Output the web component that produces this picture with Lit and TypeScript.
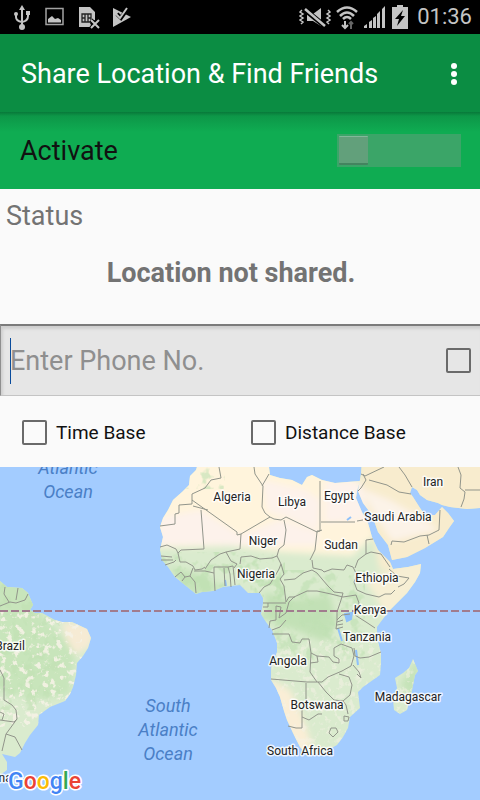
import { LitElement, html, css, svg } from "lit";
import { customElement, state } from "lit/decorators.js";

type Label = { x: number; y: number; text: string };

const COUNTRIES: Label[] = [
  { x: 232, y: 501, text: "Algeria" },
  { x: 292, y: 506, text: "Libya" },
  { x: 339, y: 500, text: "Egypt" },
  { x: 433, y: 486, text: "Iran" },
  { x: 398, y: 521, text: "Saudi Arabia" },
  { x: 263, y: 545, text: "Niger" },
  { x: 341, y: 549, text: "Sudan" },
  { x: 256, y: 578, text: "Nigeria" },
  { x: 377, y: 582, text: "Ethiopia" },
  { x: 370, y: 614, text: "Kenya" },
  { x: 367, y: 641, text: "Tanzania" },
  { x: 288, y: 665, text: "Angola" },
  { x: 317, y: 709, text: "Botswana" },
  { x: 408, y: 701, text: "Madagascar" },
  { x: 300, y: 755, text: "South Africa" },
  { x: 10, y: 650, text: "Brazil" },
  { x: -14, y: 782, text: "Argentina" },
];

const OCEANS: Label[] = [
  { x: 68, y: 474, text: "Atlantic" },
  { x: 68, y: 498, text: "Ocean" },
  { x: 168, y: 712, text: "South" },
  { x: 168, y: 736, text: "Atlantic" },
  { x: 168, y: 760, text: "Ocean" },
];

const AFRICA =
  "M199 460L196 470 190 476 189 485 182 492 173 500 168 510 163 518 160 527 163 537 160 550 162 560 168 567 175 577 185 585 196 594 202 592 213 591 223 587 240 585 248 593 260 593 263 598 263 603 261 614 266 622 272 630 277 643 277 652 271 668 271 680 276 688 280 697 284 711 287 720 293 733 300 747 307 755 323 753 337 745 343 737 348 728 350 717 360 708 359 700 358 692 363 687 380 675 381 664 381 653 377 638 377 627 388 612 398 602 407 593 415 582 420 573 421 564 408 567 393 569 390 562 378 550 372 537 368 523 362 512 356 498 357 491 360 481 347 482 335 483 322 480 312 475 307 477 302 485 292 480 280 478 270 475 269 467 269 460Z";
const ASIA =
  "M362 460L361 474 358 491 363 503 372 515 378 532 388 545 392 560 407 557 425 548 443 537 449 528 454 521 448 513 442 507 435 515 425 515 420 508 413 497 410 493 412 487 417 490 420 495 427 500 438 503 442 505 450 507 467 509 480 508 490 508 490 460Z";
const BRAZIL =
  "M-10 575L0 581 7 587 22 588 28 593 33 605 30 610 35 613 42 613 55 620 62 622 72 622 87 629 91 638 88 648 83 656 77 663 76 675 73 687 70 694 65 701 50 707 39 715 38 725 30 735 25 743 20 753 15 757 2 754 7 762 7 770 0 775 -10 780Z";
const MADAGASCAR =
  "M413 659L418 671 415 675 412 690 407 710 400 714 394 710 393 700 397 688 395 678 403 673 409 668Z";

const BORDERS = [
  "M219 467L221 478 211 480 205 488 192 494 192 504 179 505 179 513 175 514 175 524 160 526",
  "M192 500L237 532 237 535 241 534 270 517 265 513 262 507 263 486 255 474 254 467",
  "M262 486L269 474M270 517L274 519 281 520 286 517 317 532",
  "M193 506L208 510M201 510L204 549 181 550 178 553",
  "M160 547L167 545 176 549 178 553 180 562 186 562 193 566 195 570 202 569 205 567",
  "M161 556L172 557M161 560H173M165 565L174 562 176 560",
  "M175 577L181 572 185 577 182 581M185 577L190 576 195 582 196 593M190 576L193 568",
  "M194 571L205 571 214 573 215 591M214 573V567L228 567 230 574 231 587M224 568L225 586M228 567L233 566 235 585",
  "M205 569L211 560 220 554 226 552 231 561 237 564 234 568",
  "M226 552L240 549 241 534M240 564L241 557 251 556 260 559 272 558 277 556 279 549 284 545 286 530 284 520",
  "M277 556L281 564 279 569 275 576 270 584 264 587 259 593M281 564L284 574 280 579 284 586 286 602",
  "M284 580L295 579 303 573 312 570 317 573M310 560L315 550 317 532 322 530",
  "M312 560L313 568 322 570 324 572 332 569 344 570 347 565 353 567",
  "M317 532V531H320V481M321 522H355M357 521L363 520",
  "M317 573L322 579 328 586 334 592 343 593 341 600 337 612 337 620",
  "M263 603H286M268 603V607H263M276 606V620L270 621 269 628M276 606L281 607 279 618 286 613 289 602 294 597 307 591 317 591 331 594 343 597 356 595",
  "M286 602L289 597 295 597M272 630L280 627 286 620",
  "M353 567L357 575 354 582 357 590 366 594 379 597 385 594 391 594",
  "M366 540L373 539M366 540L366 554 371 552 381 554 390 567M366 554L358 560 355 568",
  "M391 594L395 590M398 587L404 584 409 578 397 576 389 569",
  "M356 595L359 603 355 615M337 620L342 615 350 614M355 615L366 622 375 628",
  "M337 622L343 620M337 625L343 624M337 620L336 629 343 627",
  "M272 634L289 634 292 642 300 643 302 639 309 639 311 653 317 656",
  "M311 653L310 672 317 682M317 656L318 662 310 663M317 656L329 657 333 662 339 663 339 659 334 656 334 648 341 644",
  "M341 644L352 648 354 656 351 666 342 671 328 677 322 682 316 682 307 682 271 679",
  "M354 648L355 656 360 658 369 657 381 652M353 665L359 672 361 678 357 674",
  "M306 683V707H302V728L296 728 288 726M302 717L309 720 318 714 322 714M318 682L326 692 334 700 343 701 350 695 352 685 349 677 339 674",
  "M343 701L346 705 348 714M344 716L349 717 348 721 344 721ZM331 728L336 728 338 732 333 737 329 733Z",
  "M363 474L366 480 361 488 358 491M361 474L365 476 384 467M369 480L387 485 399 492 411 494",
  "M399 467L405 475 412 487M391 545L392 541 404 542 420 536 429 535 439 530 440 510M427 535L429 544",
  "M458 467L461 475 460 488 465 492 464 499 461 507M465 490L480 490",
  "M0 606L10 602 16 603 25 600 28 594M5 587L4 594 9 602M18 588L16 600",
  "M0 670L4 678 4 700 12 705 16 710 17 719 14 722 0 720M17 719L6 734 2 751M6 734L15 737 22 750M0 712L4 714 2 720",
];

@customElement("world-map")
export class WorldMap extends LitElement {
  static styles = css`
    :host {
      display: block;
      overflow: hidden;
      background: #a3ccff;
    }
    .map {
      display: block;
      width: 100%;
      height: 100%;
    }
    .country {
      font: 400 12px Roboto, "Liberation Sans", sans-serif;
      fill: #222;
      stroke: #fff;
      stroke-width: 3px;
      stroke-opacity: 0.8;
      stroke-linejoin: round;
      paint-order: stroke;
      text-anchor: middle;
    }
    .ocean {
      font: italic 400 18px Roboto, "Liberation Sans", sans-serif;
      fill: #4a7fc6;
      text-anchor: middle;
    }
    .border {
      fill: none;
      stroke: #92958b;
      stroke-width: 1;
      stroke-linejoin: round;
    }
    .logo {
      font: 500 23px Roboto, "Liberation Sans", sans-serif;
      stroke: #fff;
      stroke-width: 3px;
      stroke-linejoin: round;
      paint-order: stroke;
    }
    .blue { fill: #4285f4; }
    .red { fill: #ea4335; }
    .yellow { fill: #fbbc05; }
    .green { fill: #34a853; }
  `;

  render() {
    return html`
      <svg class="map" viewBox="0 467 480 333" preserveAspectRatio="xMidYMid slice" role="img" aria-label="Map">
        <defs>
          <clipPath id="land">
            <path d=${AFRICA} /><path d=${ASIA} /><path d=${BRAZIL} /><path d=${MADAGASCAR} />
          </clipPath>
          <filter id="soft" x="-20%" y="-20%" width="140%" height="140%">
            <feGaussianBlur stdDeviation="3" />
          </filter>
          <filter id="pale" x="0" y="0" width="1" height="1" color-interpolation-filters="sRGB">
            <feTurbulence type="fractalNoise" baseFrequency="0.16" numOctaves="3" seed="4" />
            <feColorMatrix values="0 0 0 0 0.96  0 0 0 0 0.95  0 0 0 0 0.9  7 0 0 0 -3.8" />
          </filter>
          <filter id="leaf" x="0" y="0" width="1" height="1" color-interpolation-filters="sRGB">
            <feTurbulence type="fractalNoise" baseFrequency="0.08" numOctaves="3" seed="9" />
            <feColorMatrix values="0 0 0 0 0.75  0 0 0 0 0.88  0 0 0 0 0.7  7 0 0 0 -3.6" />
          </filter>
        </defs>
        <g clip-path="url(#land)">
          <rect x="0" y="460" width="480" height="340" fill="#daebce" />
          <g filter="url(#soft)">
            <path d="M150 455H350L375 535 352 556 280 552 230 546 155 548Z" fill="#fff4dc" />
            <path d="M160 518L200 510 240 535 280 520 318 532 318 545 270 545 200 545 160 545ZM262 480L305 490 320 500 318 530 285 516 268 512ZM325 480L362 482 368 520 325 522Z" fill="#fdf2eb" />
            <path d="M355 455H495V570H380Z" fill="#f8ecce" />
            <path d="M360 488L390 500 425 520 438 530 392 541 378 520Z" fill="#fcf3e8" />
            <path d="M365 580L430 556 425 580 385 622 378 600Z" fill="#f7efd4" />
            <path d="M264 592L290 600 330 595 336 620 325 642 295 630 270 622Z" fill="#c2e1b6" />
            <path d="M268 678L290 690 302 715 312 745 300 755 280 720Z" fill="#faeed6" />
            <path d="M-5 580H30L42 616 76 650 70 695 35 700 -5 690Z" fill="#c8e5bb" />
            <path d="M62 622L94 625 92 645 75 655 66 640Z" fill="#f6ebd4" />
            <path d="M168 566L200 574 228 590 190 594ZM400 685L420 655 415 700Z" fill="#c5e3b8" />
          </g>
          <rect x="155" y="552" width="130" height="48" filter="url(#leaf)" opacity="0.7" />
          <rect x="255" y="570" width="110" height="90" filter="url(#leaf)" opacity="0.6" />
          <rect x="0" y="580" width="60" height="130" filter="url(#leaf)" opacity="0.5" />
          <rect x="0" y="612" width="82" height="115" filter="url(#pale)" opacity="0.9" />
          <rect x="265" y="640" width="155" height="110" filter="url(#pale)" opacity="0.5" />
          <rect x="180" y="467" width="45" height="22" filter="url(#leaf)" opacity="0.6" />
        </g>
        <path d="M345 614L352 613 351 619 347 621ZM338 628L342 641M356 650L358 665M225 580L226 586M347 520L351 517" fill="#8ec0fa" stroke="#8ec0fa" stroke-width="2" />
        ${BORDERS.map((d) => svg`<path class="border" d=${d} />`)}
        <path d="M0 611H480" stroke="#a17c8e" stroke-width="2" stroke-dasharray="8 3" />
        ${OCEANS.map((l) => svg`<text class="ocean" x=${l.x} y=${l.y}>${l.text}</text>`)}
        ${COUNTRIES.map((l) => svg`<text class="country" x=${l.x} y=${l.y}>${l.text}</text>`)}
        <text class="logo" x="8" y="789"><tspan class="blue">G</tspan><tspan class="red">o</tspan><tspan class="yellow">o</tspan><tspan class="blue">g</tspan><tspan class="green">l</tspan><tspan class="red">e</tspan></text>
      </svg>
    `;
  }
}

@customElement("status-bar")
export class StatusBar extends LitElement {
  static styles = css`
    :host {
      display: flex;
      justify-content: space-between;
      height: 34px;
      padding: 0 8px 0 12px;
      background: #000;
      color: #c4c4c4;
    }
    .group {
      display: flex;
      align-items: center;
    }
    .left { gap: 12px; }
    .right { gap: 4px; }
    .clock {
      padding-left: 4px;
      font-size: 22px;
      line-height: 32px;
    }
    svg { display: block; }
  `;

  render() {
    return html`
      <div class="group left">
        <svg width="20" height="26" viewBox="0 0 20 26" fill="none" stroke="#c4c4c4" stroke-width="2">
          <path d="M10 4V23M4 10V13Q4 17 10 18Q16 17 16 12V9" />
          <path d="M10 1L13 6H7Z" fill="#c4c4c4" stroke="none" />
          <circle cx="10" cy="23" r="3" fill="#c4c4c4" stroke="none" />
          <circle cx="4" cy="10" r="2" fill="#c4c4c4" stroke="none" />
          <path d="M14 7H18V11H14Z" fill="#c4c4c4" stroke="none" />
        </svg>
        <svg width="22" height="20" viewBox="0 0 22 20" fill="#c4c4c4">
          <path d="M2 1.500H19V17.500H2Z" fill="none" stroke="#a2a2a2" stroke-width="1.500" />
          <path d="M4 15.500V12L8 9 11 12 14 11 17 13V15.500Z" />
        </svg>
        <svg width="22" height="24" viewBox="0 0 22 24" fill="#c4c4c4">
          <path d="M1 2H12L17 7V15L14 16 12 18 14 22H1Z" />
          <path d="M4 9H13V17H4ZM7 9V17M10 9V17M4 13H7M10 13H13" fill="none" stroke="#222" stroke-width="1.300" />
          <path d="M13 15L21 23M21 15L13 23" stroke="#000" stroke-width="4" />
          <path d="M13 15L21 23M21 15L13 23" stroke="#c4c4c4" stroke-width="2" />
        </svg>
        <svg width="20" height="22" viewBox="0 0 20 22">
          <path d="M1 2L19 11 1 21Z" fill="#c4c4c4" />
          <path d="M5 8L9 12 16 2" fill="none" stroke="#000" stroke-width="4" />
          <path d="M4 8L8 12 15 2" fill="none" stroke="#c4c4c4" stroke-width="2" />
        </svg>
      </div>
      <div class="group right">
        <svg width="32" height="22" viewBox="0 0 32 22" fill="none" stroke="#c4c4c4">
          <path d="M3 4L1 6 4 8 1 10 4 12 1 14 4 16 2 18M29 4L31 6 28 8 31 10 28 12 31 14 28 16 30 18" stroke-width="1.500" />
          <path d="M8 8H14L22 2V20L14 15H8Z" fill="#c4c4c4" stroke="none" />
          <path d="M5 3L27 21" stroke="#000" stroke-width="5" />
          <path d="M6 3L26 20" stroke-width="2.500" />
        </svg>
        <svg width="24" height="26" viewBox="0 0 24 26" fill="none" stroke="#c4c4c4" stroke-width="2.500">
          <path d="M2 8Q12 -1 22 8M5 12Q12 5 19 12M8 15Q12 11 16 15" />
          <path d="M10 17V24M7 21L10 24 13 21" stroke-width="2" />
          <path d="M16 25V18M14 20L16 18 18 20" stroke="#666" stroke-width="2" />
        </svg>
        <svg width="24" height="24" viewBox="0 0 24 24" fill="#c4c4c4">
          <path d="M1 23V21L4 19V23ZM6 23V17L9 15V23ZM10 23V13L13 11V23ZM14 23V9L17 6V23ZM19 23V4L22 1V23Z" />
        </svg>
        <svg width="18" height="26" viewBox="0 0 18 26">
          <path d="M6 1H12V3H17V25H1V3H6Z" fill="#c4c4c4" />
          <path d="M12 6L4 15H8L6 22 14 12H10Z" fill="#000" />
        </svg>
        <span class="clock">01:36</span>
      </div>
    `;
  }
}

@customElement("app-root")
export class AppRoot extends LitElement {
  @state() private phone = "";

  static styles = css`
    :host {
      display: flex;
      flex-direction: column;
      min-height: 100vh;
      font-family: Roboto, "Liberation Sans", sans-serif;
      background: #fafafa;
      color: #111;
    }
    * { box-sizing: border-box; }
    .bar {
      display: flex;
      align-items: center;
      justify-content: space-between;
      height: 78px;
      padding: 2px 16px 0 21px;
      background: #0b8d43;
      color: #fff;
    }
    .title {
      margin: 0;
      font-size: 27px;
      line-height: 36px;
      font-weight: 400;
      white-space: nowrap;
    }
    .more {
      display: flex;
      padding: 8px 4px;
      border: 0;
      background: none;
    }
    .activate {
      display: flex;
      align-items: center;
      justify-content: space-between;
      height: 77px;
      padding: 0 19px 0 20px;
      background: linear-gradient(#08793a, #0d9748 4px, #0fac52 20px);
      font-size: 27px;
      line-height: 36px;
    }
    .switch {
      display: flex;
      appearance: none;
      width: 124px;
      height: 33px;
      margin: 0;
      padding: 2px;
      background: #3ba568;
    }
    .switch::before {
      content: "";
      width: 29px;
      border-top: 1px solid #83b89a;
      border-bottom: 2px solid #43845f;
      border-radius: 1px;
      background: #62a07b;
    }
    .switch:checked { justify-content: flex-end; }
    .status {
      height: 135px;
      padding: 9px 6px;
      color: #737373;
      font-size: 27px;
      line-height: 36px;
    }
    .heading {
      margin: 0;
      font-size: 27px;
      font-weight: 400;
    }
    .message {
      margin: 21px 0 0;
      padding-right: 18px;
      font-weight: 700;
      text-align: center;
    }
    .phone {
      position: relative;
      display: flex;
      align-items: center;
      height: 72px;
      padding: 0 9px;
      border-top: 2px solid #7b7b7b;
      border-bottom: 1px solid #c4c4c4;
      border-left: 1px solid #8f8f8f;
      background: #e6e6e6;
      box-shadow: inset 2px 3px 3px #cfcfcf;
    }
    .field {
      flex: 1;
      min-width: 0;
      height: 46px;
      padding: 0;
      border: 0;
      outline: 0;
      background: none;
      color: #222;
      font: 27px Roboto, "Liberation Sans", sans-serif;
    }
    .field::placeholder { color: #8f8f8f; opacity: 1; }
    .caret {
      position: absolute;
      left: 9px;
      width: 1px;
      height: 46px;
      background: #0a4c9c;
    }
    .options {
      display: grid;
      grid-template-columns: 229fr 229fr;
      align-items: center;
      height: 71px;
      padding: 2px 0 0 22px;
      font-size: 19px;
      line-height: 24px;
    }
    .option {
      display: flex;
      align-items: center;
      gap: 9px;
    }
    .box {
      appearance: none;
      flex: none;
      width: 25px;
      height: 25px;
      margin: 0;
      border: 2px solid #6a6a6a;
      border-radius: 2px;
    }
    .box:checked { background: #0fac52; }
    .map {
      flex: 1 0 auto;
      height: 333px;
    }
  `;

  private onPhone(e: Event) {
    this.phone = (e.target as HTMLInputElement).value;
  }

  render() {
    return html`
      <status-bar></status-bar>
      <header class="bar">
        <h1 class="title">Share Location &amp; Find Friends</h1>
        <button class="more" aria-label="More options">
          <svg width="12" height="24" viewBox="0 0 12 24" fill="#fff">
            <circle cx="6" cy="4" r="3" /><circle cx="6" cy="12" r="3" /><circle cx="6" cy="20" r="3" />
          </svg>
        </button>
      </header>
      <div class="activate">
        <label for="activate">Activate</label>
        <input id="activate" class="switch" type="checkbox" role="switch" />
      </div>
      <section class="status">
        <h2 class="heading">Status</h2>
        <p class="message">Location not shared.</p>
      </section>
      <div class="phone">
        <input class="field" type="tel" aria-label="Phone number" placeholder="Enter Phone No." .value=${this.phone} @input=${this.onPhone} />
        ${this.phone ? "" : html`<span class="caret"></span>`}
        <input class="box" type="checkbox" aria-label="Use this phone number" />
      </div>
      <div class="options">
        <label class="option"><input class="box" type="checkbox" />Time Base</label>
        <label class="option"><input class="box" type="checkbox" />Distance Base</label>
      </div>
      <world-map class="map"></world-map>
    `;
  }
}
